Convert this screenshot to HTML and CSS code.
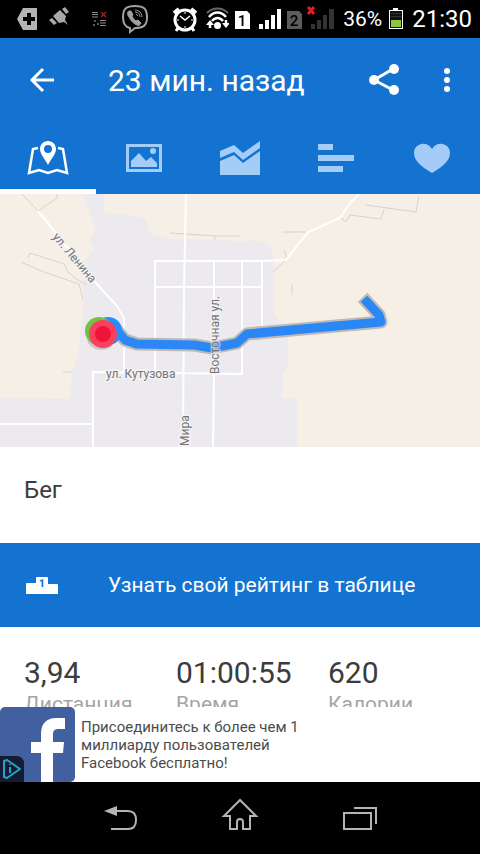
FILE: index.html
```
<!DOCTYPE html>
<html lang="ru">
<head>
  <meta charset="UTF-8">
  <meta name="viewport" content="width=device-width, initial-scale=1.0">
  <title>Бег</title>
  <link rel="stylesheet" href="styles.css">
</head>
<body>

  <div class="status">
    <div class="status-left">
      <svg width="30" height="38" viewBox="12 0 30 38"><path d="M17 19 23 8H37V30H23Z" fill="#b4b4b4"/><path d="M29 13v12M23 19h12" stroke="#000" stroke-width="4"/></svg>
      <svg width="30" height="38" viewBox="50 0 30 38" fill="#a8a8a8"><path d="M51 20l3-2 5 5-3 2ZM64 9l3-2 4 5-3 2ZM55 16l7-6 6 6-1 4 3 5-4-3-5 1Z"/></svg>
      <svg width="30" height="38" viewBox="84 0 30 38"><path d="M92 12.500h6M92 14.500h6M92 17h6M100 20.500h6M100 23h6M100 25.500h6" stroke="#8c8c8c"/><path d="M101 12l5 5M106 12l-5 5" stroke="#b01818" stroke-width="1.500"/><path d="M94 21h2M97 24h2M93 25h2" stroke="#777" stroke-width="1.500"/></svg>
      <svg width="30" height="38" viewBox="120 0 30 38" fill="none" stroke="#a0a0a0"><path d="M135 6c9 0 12 3 12 11 0 9-4 11-12 11l-5 4v-4c-5-1-7-4-7-11 0-8 3-11 12-11Z" stroke-width="2"/><path d="M129 11c-2 1-2 3 0 6 2 4 5 7 8 8 2 1 3 0 4-2l-3-3-2 1c-2-1-3-3-4-5l1-1-2-4Z" fill="#a0a0a0"/><path d="M135 10c4 0 7 3 7 7M135 12c3 0 5 2 5 5M136 14l2 2"/></svg>
    </div>
    <div class="status-right">
      <svg width="28" height="38" viewBox="172 0 28 38" fill="none" stroke="#fff"><circle cx="186" cy="20" r="10" stroke-width="3"/><path d="M181 16l5 4 5-4" stroke-width="1.500"/><path d="M175 13l5-4M192 9l5 4" stroke-width="4"/><path d="M179 28l-2 3M193 28l2 3" stroke-width="3"/><path d="M186 12v2M186 26v2M178 20h2M192 20h2"/></svg>
      <svg width="24" height="38" viewBox="206 0 24 38" fill="none" stroke="#fff"><path d="M208 13c6-6 15-6 21 0" stroke="#666" stroke-width="2"/><path d="M210 17c5-6 12-6 17 0M213 21c3-4 8-4 11 0" stroke-width="2.500"/><circle cx="218.500" cy="25.500" r="3.500" fill="#fff" stroke="none"/><path d="M211 28v-4M227 20v4" stroke-width="2.500"/><path d="M207 25l4-5 4 5ZM223 23l4 5 4-5Z" fill="#fff" stroke="none"/></svg>
      <svg width="16" height="38" viewBox="236 0 16 38"><path d="M236 11h12l3 3v15h-15Z" fill="#fff"/><text class="sim" x="243" y="26">1</text></svg>
      <svg width="24" height="38" viewBox="258 0 24 38" fill="#fff"><path d="M260 24h4v5h-4ZM266 20h4v9h-4ZM272 15h4v14h-4ZM278 9h4v20h-4Z"/></svg>
      <svg width="16" height="38" viewBox="288 0 16 38"><path d="M288 11h12l3 3v15h-15Z" fill="#5c5c5c"/><text class="sim" x="295" y="26">2</text></svg>
      <svg class="spill" width="26" height="38" viewBox="310 0 26 38" fill="#333"><path d="M312 24h4v5h-4ZM318 20h4v9h-4ZM324 15h4v14h-4ZM330 9h5v20h-5Z"/><path d="M309 7l6 7M315 7l-6 7" stroke="#e02020" stroke-width="3"/></svg>
      <span class="percent">36%</span>
      <svg width="16" height="38" viewBox="388 0 16 38"><path d="M393 8h5v2h-5Z" fill="#fff"/><rect x="389.500" y="10.500" width="13" height="18" fill="#111" stroke="#fff"/><path d="M391 20h10v7h-10Z" fill="#8cc63c"/><path d="M391 13.500h10M391 16.500h10" stroke="#333"/></svg>
      <span class="clock">21:30</span>
    </div>
  </div>

  <header class="appbar">
    <button class="icon-btn" aria-label="Назад">
      <svg width="36" height="36" viewBox="24 62 36 36"><path d="M54 80H32M43 69 32 80l11 11" fill="none" stroke="#fff" stroke-width="3"/></svg>
    </button>
    <h1>23 мин. назад</h1>
    <button class="icon-btn" aria-label="Поделиться">
      <svg width="36" height="36" viewBox="366 62 36 36" fill="#fff"><path d="M393 69 374 80l19 10" fill="none" stroke="#fff" stroke-width="3"/><circle cx="394" cy="69" r="5"/><circle cx="374" cy="80" r="5"/><circle cx="394" cy="90" r="5"/></svg>
    </button>
    <button class="icon-btn more" aria-label="Ещё">
      <svg width="12" height="36" viewBox="441 62 12 36" fill="#fff"><circle cx="447" cy="71" r="3"/><circle cx="447" cy="80" r="3"/><circle cx="447" cy="89" r="3"/></svg>
    </button>
  </header>

  <nav class="tabs">
    <button class="tab active" aria-label="Карта">
      <svg width="48" height="48" viewBox="24 134 48 48"><path d="M38 148l-5 1-4 24 10-3 9 3 9-3 10 3-4-24-5-1" fill="none" stroke="#fff" stroke-width="2.500"/><path fill-rule="evenodd" d="M48 141c-5 0-8 4-8 8 0 5 5 10 8 16 3-6 8-11 8-16 0-4-3-8-8-8Zm0 4a4 4 0 1 1 0 8 4 4 0 0 1 0-8Z" fill="#fff"/></svg>
    </button>
    <button class="tab" aria-label="Фото">
      <svg width="48" height="48" viewBox="120 134 48 48" fill="#a3cdf7"><path fill-rule="evenodd" d="M126 144h36v28h-36Zm3 3v22h30v-22Z"/><path d="M131 167v-6l8-8 7 8 5-4 6 6v4Z"/><circle cx="153" cy="151" r="3"/></svg>
    </button>
    <button class="tab" aria-label="Графики">
      <svg width="48" height="48" viewBox="216 134 48 48" fill="#a3cdf7"><path d="M220 151l14-6 9 8 17-12v7l-17 12-9-8-14 6Z"/><path d="M220 161l14-6 9 8 17-12v24h-40Z"/></svg>
    </button>
    <button class="tab" aria-label="Круги">
      <svg width="48" height="48" viewBox="312 134 48 48" fill="#a3cdf7"><path d="M318 144h15v6h-15ZM318 155h36v6h-36ZM318 166h25v6h-25Z"/></svg>
    </button>
    <button class="tab" aria-label="Пульс">
      <svg width="48" height="48" viewBox="408 134 48 48"><path d="M432 173c-10-6-18-12-18-20 0-10 13-13 18-4 5-9 18-6 18 4 0 8-8 14-18 20Z" fill="#a3cdf7"/></svg>
    </button>
  </nav>

  <svg class="map" viewBox="0 0 480 253" role="img" aria-label="Маршрут на карте">
    <rect width="480" height="253" fill="#f6efe6"/>
    <path d="M83 0h21v18l42 6 4 16 25 5 65 2c20-2 32 1 33 12l1 60 14 20v32l-5 8-1 25h15v49H0v-49l70 1 2-27 6-15 6-55-2-39 12-14-5-9 7-10Z" fill="#eceaee"/>
    <!-- paths -->
    <g fill="none" stroke="#d8d2c9" stroke-width="1">
      <path d="M22 0l16 17 19-13V0M21 68l23 10 35 12 4 16M28 64l2-5 34 11 4 8 10 8 8 5M63 178h9M170 39l45 3h25M215 42v4M282 38h24M284 56l3 9-14 13M292 90v11M341 24l5 4 4-7 31 4 3-10M366 11l50 7 3-16"/>
    </g>
    <!-- streets -->
    <g fill="none" stroke="#fff" stroke-width="2">
      <path d="M38 17l57 71 22 24 7 12v55M155 179V67h107l24-1 22-28 32-14 10-15 9-9M186 0l-2 93-1 160M214 67v112l-1 74M242 67v113M262 67v68M155 93h107M93 253v-75l150 2M0 230h93"/>
    </g>
    <g class="street">
      <text transform="translate(52 43) rotate(50)">ул. Ленина</text>
      <text x="106" y="184">ул. Кутузова</text>
      <text transform="translate(189 252) rotate(-90)">Мира</text>
    </g>
    <g fill="none" stroke-linejoin="round">
      <path d="M116 135l9 11 12 4 57 1 18 3 25-5 10-9 134-12-2-7-12-13" stroke="#bdb9b5" stroke-width="13" stroke-linecap="square"/>
      <path d="M116 135l9 11 12 4 57 1 18 3 25-5 10-9 134-12-2-7-12-13" stroke="#2b87f5" stroke-width="9" stroke-linecap="square"/>
    </g>
    <g class="street over">
      <text transform="translate(219 180) rotate(-90)">Восточная ул.</text>
    </g>
    <ellipse cx="101" cy="144" rx="14" ry="12" fill="#000" opacity=".15"/>
    <circle cx="108" cy="137" r="14" fill="#1e90ff"/>
    <circle cx="99" cy="137" r="14" fill="#76c043"/>
    <circle cx="103" cy="140" r="14" fill="#fb3f5f"/>
    <circle cx="103" cy="140" r="8" fill="#f01438"/>
  </svg>

  <h2 class="sport">Бег</h2>

  <a class="rating" href="#">
    <svg width="36" height="36" viewBox="24 567 36 36"><path d="M27 583h9v-5q0-1 1-1h10q1 0 1 1v6h9q1 0 1 1v9H26v-10q0-1 1-1Z" fill="#fff"/><text class="place" x="42" y="587">1</text></svg>
    <span>Узнать свой рейтинг в таблице</span>
  </a>

  <dl class="stats">
    <div><dd>3,94</dd><dt>Дистанция</dt></div>
    <div><dd>01:00:55</dd><dt>Время</dt></div>
    <div><dd>620</dd><dt>Калории</dt></div>
  </dl>

  <a class="ad" href="#">
    <svg width="75" height="75" viewBox="0 0 75 75">
      <rect width="75" height="75" rx="5" fill="#4260a0"/>
      <path d="M41 75V46H31V35h10v-8c0-11 6-16 15-16h9v11h-6c-5 0-6 2-6 6v7h11l-1 11H53v29Z" fill="#fff"/>
      <path d="M0 49h16q8 0 8 8v18H0Z" fill="#151b33"/>
      <path d="M4 54v16l3 1 13-9-13-9Z" fill="none" stroke="#22a5c4" stroke-width="2" stroke-linejoin="round"/>
      <path d="M10 60v6M10 57v1" stroke="#22a5c4" stroke-width="2"/>
    </svg>
    <p>Присоединитесь к более чем 1 миллиарду пользователей Facebook бесплатно!</p>
  </a>

  <div class="navbar">
    <button aria-label="Назад"><svg width="40" height="40" viewBox="100 801 40 40"><path d="M116 814h12q8 0 8 9 0 9-8 9h-17" fill="none" stroke="#b4b4b4" stroke-width="2"/><path d="M104 814l13-5v10Z" fill="#b4b4b4"/></svg></button>
    <button aria-label="Домой"><svg width="40" height="40" viewBox="220 801 40 40"><path d="M240 803l-16 16h6v13h7v-7q0-3 3-3t3 3v7h7v-13h6Z" fill="none" stroke="#b4b4b4" stroke-width="2"/></svg></button>
    <button aria-label="Недавние"><svg width="40" height="40" viewBox="340 801 40 40"><path d="M344 816h27v16h-27ZM354 811h22v16" fill="none" stroke="#b4b4b4" stroke-width="2"/></svg></button>
  </div>

</body>
</html>
```
FILE: styles.css
```
* {
  box-sizing: border-box;
}

body {
  font-family: Roboto, sans-serif;
  background: #fff;
  color: #3c3c3c;
  margin: 0;
  height: 100vh;
  display: flex;
  flex-direction: column;
  overflow: hidden;
}

h1, h2, p, dl, dd {
  margin: 0;
  font-weight: 400;
}

svg {
  display: block;
  flex: none;
}

button {
  border: none;
  padding: 0;
  background: none;
  cursor: pointer;
}

a {
  color: inherit;
  text-decoration: none;
}

.status {
  display: flex;
  justify-content: space-between;
  flex: none;
  height: 38px;
  padding: 0 8px 0 12px;
  background: #000;
  color: #fff;
}

.status-left,
.status-right {
  display: flex;
  align-items: center;
  gap: 6px;
}

.percent,
.clock {
  padding-left: 2px;
}

.percent {
  font-size: 21px;
}

.clock {
  font-size: 24px;
}

.sim {
  font-size: 15px;
  font-weight: 500;
  text-anchor: middle;
  fill: #000;
}

.spill {
  overflow: visible;
}

/* blue header */
.appbar {
  display: flex;
  align-items: center;
  flex: none;
  height: 84px;
  padding: 0 27px 0 24px;
  background: #1473d1;
  color: #fff;
}

.appbar h1 {
  flex: 1;
  padding-left: 48px;
  font-size: 30px;
}

.more {
  margin-left: 39px;
}

.tabs {
  display: grid;
  grid-template-columns: repeat(5, 1fr);
  flex: none;
  height: 72px;
  background: #1473d1;
}

.tab {
  display: flex;
  align-items: center;
  justify-content: center;
  border-top: 5px solid transparent;
  border-bottom: 5px solid transparent;
}

.tab.active {
  border-bottom-color: #fff;
}

.map {
  width: 100%;
  height: auto;
}

.street {
  font-size: 12px;
  fill: #757575;
  stroke: #f4f2f3;
  stroke-width: 3px;
  paint-order: stroke;
}

.over {
  stroke-opacity: 0.5;
}

.sport {
  flex: none;
  padding: 24px 24px 34px;
  font-size: 24px;
  line-height: 38px;
}

.rating {
  display: flex;
  align-items: center;
  gap: 48px;
  flex: none;
  height: 84px;
  padding: 0 24px;
  background: #1473d1;
  color: #fff;
  font-size: 21px;
}

.place {
  font-size: 10px;
  font-weight: 900;
  text-anchor: middle;
  fill: #1473d1;
}

/* cut off by the ad below */
.stats {
  display: grid;
  grid-template-columns: repeat(3, 1fr);
  gap: 16px;
  flex: 1;
  min-height: 0;
  padding: 28px 16px 0 24px;
  overflow: hidden;
}

.stats div {
  display: flex;
  flex-direction: column;
}

.stats dd {
  font-size: 30px;
  line-height: 36px;
}

.stats dt {
  font-size: 21px;
  line-height: 26px;
  color: #a5a5a5;
}

.ad {
  display: flex;
  align-items: center;
  gap: 6px;
  flex: none;
  background: #fff;
  color: #4c4c4c;
}

.ad p {
  max-width: 240px;
  font-size: 15px;
  line-height: 18px;
}

.navbar {
  display: flex;
  align-items: center;
  justify-content: center;
  gap: 80px;
  flex: none;
  height: 72px;
  background: #000;
}
```
